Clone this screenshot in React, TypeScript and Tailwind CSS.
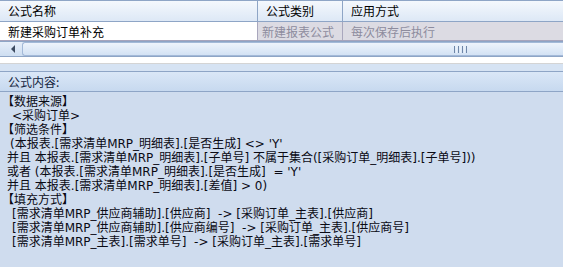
import React from "react";

const font = { fontFamily: '"Noto Sans CJK SC", "Noto Sans", sans-serif' };
const contentFont = { fontFamily: '"DejaVu Sans", "Noto Sans CJK SC", sans-serif' };

const lines: { t: string; x: number }[] = [
  { t: "【数据来源】", x: 2 },
  { t: "<采购订单>", x: 12 },
  { t: "【筛选条件】", x: 2 },
  { t: "(本报表.[需求清单MRP_明细表].[是否生成] <> 'Y'", x: 10 },
  { t: "并且 本报表.[需求清单MRP_明细表].[子单号] 不属于集合([采购订单_明细表].[子单号]))", x: 7 },
  { t: "或者 (本报表.[需求清单MRP_明细表].[是否生成]  = 'Y'", x: 7 },
  { t: "并且 本报表.[需求清单MRP_明细表].[差值] > 0)", x: 7 },
  { t: "【填充方式】", x: 2 },
  { t: "[需求清单MRP_供应商辅助].[供应商]  -> [采购订单_主表].[供应商]", x: 12 },
  { t: "[需求清单MRP_供应商辅助].[供应商编号]  -> [采购订单_主表].[供应商号]", x: 12 },
  { t: "[需求清单MRP_主表].[需求单号]  -> [采购订单_主表].[需求单号]", x: 12 },
];

export default function App() {
  return (
    <div className="w-[563px] h-[267px] overflow-hidden bg-white text-[12px] text-black" style={font}>
      {/* grid */}
      <div className="border-t border-[#8ea5c6]">
        <div className="flex h-[21px] border-b border-[#8ea5c6] bg-gradient-to-b from-[#f4f8fd] to-[#dde8f6]">
          <div className="w-[258px] border-r border-[#8ea5c6] pl-[8px] leading-[20px]">公式名称</div>
          <div className="w-[85px] border-r border-[#8ea5c6] pl-[8px] leading-[20px]">公式类别</div>
          <div className="flex-1 pl-[8px] leading-[20px]">应用方式</div>
        </div>
        <div className="flex h-[19px] border-b border-[#a7a4bc]">
          <div className="w-[258px] bg-white pl-[8px] leading-[19px] border-r border-[#a9a7bd]">新建采购订单补充</div>
          <div className="w-[85px] bg-[#dcdbe3] text-[#8d8c9e] border-r border-[#a9a7bd] pl-[4px] leading-[19px]">新建报表公式</div>
          <div className="flex-1 bg-[#dcdbe3] text-[#8d8c9e] pl-[8px] leading-[19px]">每次保存后执行</div>
        </div>
        <div className="flex h-[16px] items-center border-t border-[#8ea5c6] border-b bg-gradient-to-b from-[#e6eef9] to-[#cedef1]">
          <div className="w-[22px] flex items-center justify-center pl-[4px]">
            <svg width="5" height="8" viewBox="0 0 5 8"><path d="M4 0 L0 4 L4 8 Z" fill="#3c4a60" /></svg>
          </div>
          <div className="flex-1 h-[14px] rounded-l-[3px] border border-r-0 border-[#a3b9d8] bg-gradient-to-b from-[#eef4fc] to-[#d3e2f4] flex items-center pl-[431px]">
            <div className="flex gap-[1px]">
              <div className="w-[1px] h-[7px] bg-[#6f86a8]" />
              <div className="w-[1px] h-[7px] bg-[#e9f0fa]" />
              <div className="w-[1px] h-[7px] bg-[#6f86a8]" />
              <div className="w-[1px] h-[7px] bg-[#e9f0fa]" />
              <div className="w-[1px] h-[7px] bg-[#6f86a8]" />
              <div className="w-[1px] h-[7px] bg-[#e9f0fa]" />
              <div className="w-[1px] h-[7px] bg-[#6f86a8]" />
            </div>
          </div>
        </div>
      </div>
      <div className="h-[6px] bg-white" />
      <div className="h-[1px] bg-[#d4d4d4]" />
      <div className="h-[7px] bg-[#d6e3f3]" />
      {/* panel */}
      <div className="border-t border-[#8ea5c6]">
        <div className="h-[20px] bg-gradient-to-b from-[#dae7f7] to-[#c7d9ef] border-b border-[#8ea5c6] pl-[8px] leading-[20px] text-[#15263f]">
          公式内容:
        </div>
        <div className="bg-[#cfdcee] h-[200px] pt-[3px] text-[#0a0a14]" style={contentFont}>
          {lines.map((l, i) => (
            <div key={i} className="h-[14px] leading-[14px] whitespace-pre" style={{ paddingLeft: l.x }}>
              {l.t}
            </div>
          ))}
        </div>
      </div>
    </div>
  );
}
